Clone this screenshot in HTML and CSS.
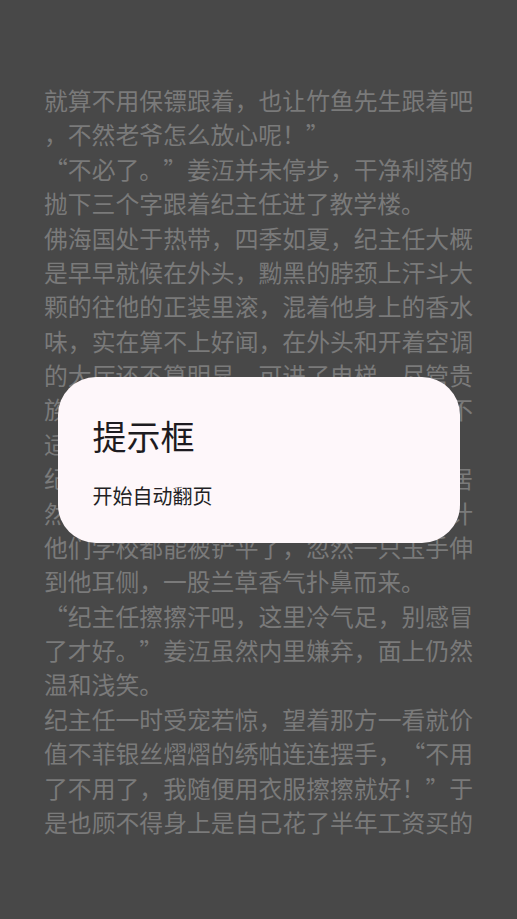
FILE: index.html
```html
<!DOCTYPE html>
<html lang="zh-CN">
<head>
<meta charset="utf-8">
<title>阅读</title>
<link rel="stylesheet" href="styles.css">
</head>
<body>
<main class="reader">
  <div class="line">就算不用保镖跟着，也让竹鱼先生跟着吧</div>
  <div class="line short">，不然老爷怎么放心呢！<span class="q">”</span></div>
  <div class="line"><span class="q">“</span>不必了。<span class="q">”</span>姜沍并未停步，干净利落的</div>
  <div class="line short">抛下三个字跟着纪主任进了教学楼。</div>
  <div class="line">佛海国处于热带，四季如夏，纪主任大概</div>
  <div class="line">是早早就候在外头，黝黑的脖颈上汗斗大</div>
  <div class="line">颗的往他的正装里滚，混着他身上的香水</div>
  <div class="line">味，实在算不上好闻，在外头和开着空调</div>
  <div class="line">的大厅还不算明显，可进了电梯，尽管贵</div>
  <div class="line">族学校的电梯宽敞，这味道也让人有些不</div>
  <div class="line short">适，姜沍微微皱了皱眉头。</div>
  <div class="line">纪主任一边引路一边絮絮叨叨，说这里居</div>
  <div class="line">然要是姜少爷在这里出了什么事，估计</div>
  <div class="line">他们学校都能被铲平了，忽然一只玉手伸</div>
  <div class="line short">到他耳侧，一股兰草香气扑鼻而来。</div>
  <div class="line"><span class="q">“</span>纪主任擦擦汗吧，这里冷气足，别感冒</div>
  <div class="line">了才好。<span class="q">”</span>姜沍虽然内里嫌弃，面上仍然</div>
  <div class="line short">温和浅笑。</div>
  <div class="line">纪主任一时受宠若惊，望着那方一看就价</div>
  <div class="line">值不菲银丝熠熠的绣帕连连摆手，<span class="q">“</span>不用</div>
  <div class="line">了不用了，我随便用衣服擦擦就好！<span class="q">”</span>于</div>
  <div class="line">是也顾不得身上是自己花了半年工资买的</div>
</main>
<div class="overlay">
  <div class="dialog" role="dialog">
    <h2 class="dialog-title">提示框</h2>
    <p class="dialog-body">开始自动翻页</p>
  </div>
</div>
</body>
</html>
```

FILE: styles.css
```css
html, body {
  margin: 0;
  padding: 0;
  background: #484848;
  height: 100%;
}

body {
  font-family: "Noto Sans CJK SC", "Noto Sans", sans-serif;
  overflow: hidden;
}

.reader {
  padding: 83px 44px 0 44px;
  color: #7a7a7a;
  font-size: 23.8px;
  line-height: 34.38px;
}

.line {
  white-space: nowrap;
  text-align: justify;
  text-align-last: justify;
  text-justify: inter-character;
}

.line.short {
  text-align-last: left;
}

.q {
  display: inline-block;
  width: 1em;
  text-align: center;
}

.overlay {
  position: fixed;
  inset: 0;
  display: flex;
  align-items: center;
  justify-content: center;
}

.dialog {
  width: 402px;
  box-sizing: border-box;
  background: #fef7fa;
  border-radius: 38px;
  padding: 39px 36px 35px 35px;
  color: #1d1b20;
}

.dialog-title {
  margin: 0;
  font-size: 34px;
  line-height: 40px;
  font-weight: 400;
}

.dialog-body {
  margin: 28px 0 0 0;
  font-size: 20px;
  line-height: 24px;
  color: #231f24;
}
```
